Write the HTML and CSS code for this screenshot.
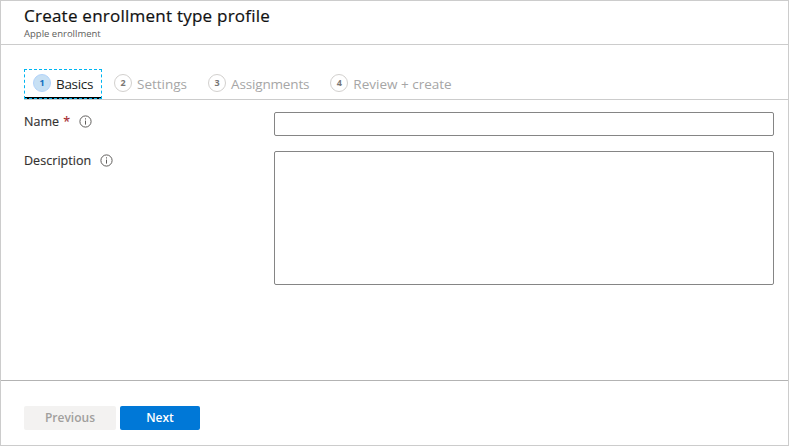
FILE: index.html
```html
<!DOCTYPE html>
<html lang="en">
<head>
<meta charset="utf-8">
<title>Create enrollment type profile</title>
<link rel="stylesheet" href="styles.css">
</head>
<body>
<div class="blade">
  <header class="header">
    <h1 class="title">Create enrollment type profile</h1>
    <p class="subtitle">Apple enrollment</p>
  </header>
  <nav class="tabs">
    <a class="tab active"><span class="step">1</span><span class="label basics">Basics</span></a>
    <a class="tab"><span class="step">2</span><span class="label settings">Settings</span></a>
    <a class="tab"><span class="step">3</span><span class="label assignments">Assignments</span></a>
    <a class="tab"><span class="step">4</span><span class="label review">Review + create</span></a>
  </nav>
  <main class="form">
    <div class="row">
      <label class="caption" for="name"><span>Name</span><span class="required">*</span>
        <svg class="info" viewBox="0 0 13 13"><circle cx="6.5" cy="6.5" r="5.6"/><path d="M6.5 5.6v4M6.5 3.3v1.2"/></svg>
      </label>
      <input class="field" id="name" type="text">
    </div>
    <div class="row">
      <label class="caption" for="description"><span>Description</span>
        <svg class="info" viewBox="0 0 13 13"><circle cx="6.5" cy="6.5" r="5.6"/><path d="M6.5 5.6v4M6.5 3.3v1.2"/></svg>
      </label>
      <textarea class="field area" id="description"></textarea>
    </div>
  </main>
  <footer class="footer">
    <button class="button previous" disabled>Previous</button>
    <button class="button next">Next</button>
  </footer>
</div>
</body>
</html>
```
FILE: styles.css
```css
* { box-sizing: border-box; }
body {
  margin: 0;
  background: #fff;
  color: #323130;
  font-family: "Open Sans", "Noto Sans", sans-serif;
}
.blade {
  display: flex;
  flex-direction: column;
  width: 789px;
  height: 446px;
  border: 1px solid #ccc;
}
.header {
  height: 44px;
  padding: 4px 0 0 23px;
  border-bottom: 1px solid #ccc;
}
.title {
  margin: 0;
  font-size: 17px;
  font-weight: 400;
  line-height: 22px;
  letter-spacing: .24px;
  color: #111;
  -webkit-text-stroke: .2px #111;
}
.subtitle {
  margin: 0;
  font-size: 9.5px;
  line-height: 13px;
  color: #605e5c;
}
.tabs {
  display: flex;
  height: 31px;
  margin: 24px 0 0 23px;
  border-bottom: 1px solid #ccc;
}
.tab {
  display: flex;
  align-items: center;
  height: 30px;
  padding: 0 8px 2px;
  margin-right: 3px;
  border: 1px solid transparent;
  color: #a6a6a6;
  font-size: 13.5px;
}
.tab.active {
  width: 78px;
  border: 1px dashed #00b4f0;
  background: linear-gradient(#000, #000) left bottom / 100% 1px no-repeat border-box;
  box-shadow: inset 0 -1px #000;
  color: #201f1e;
}
.step {
  flex: none;
  width: 18px;
  height: 18px;
  margin-right: 5px;
  border: 1px solid #d2d0ce;
  border-radius: 50%;
  color: #797775;
  font-size: 9px;
  font-weight: 700;
  line-height: 16px;
  text-align: center;
}
.active .step {
  background: #c7e0f4;
  border-color: #b3d3fa;
  color: #106ebe;
}
.label { line-height: 20px; white-space: nowrap; padding-top: 2px; }
.basics { letter-spacing: -.3px; }
.assignments { letter-spacing: -.16px; }
.form { flex: 1; padding: 12px 14px 0 23px; }
.row { display: flex; margin-bottom: 15px; }
.caption {
  display: flex;
  align-items: center;
  width: 250px;
  height: 19px;
  font-size: 12.5px;
  letter-spacing: .05px;
  -webkit-text-stroke: .15px currentColor;
}
.required { margin-left: 4px; color: #a4262c; }
.info {
  width: 13px;
  height: 13px;
  margin-left: 8.5px;
  fill: none;
  stroke: #605e5c;
  stroke-width: 1;
}
.field {
  display: block;
  width: 500px;
  height: 24px;
  margin: 0;
  border: 1px solid #858585;
  border-radius: 2px;
  outline: 0;
  background: #fff;
}
.area { height: 134px; resize: none; }
.footer {
  display: flex;
  gap: 4px;
  height: 65px;
  padding: 25px 23px 0;
  border-top: 1px solid #b3b3b3;
}
.button {
  height: 24px;
  padding: 0;
  border: 0;
  border-radius: 2px;
  font: 600 12px/22px "Open Sans", sans-serif;
}
.previous { width: 92px; background: #f3f2f1; color: #a19f9d; }
.next { width: 80px; background: #0078d7; color: #fff; }
```
